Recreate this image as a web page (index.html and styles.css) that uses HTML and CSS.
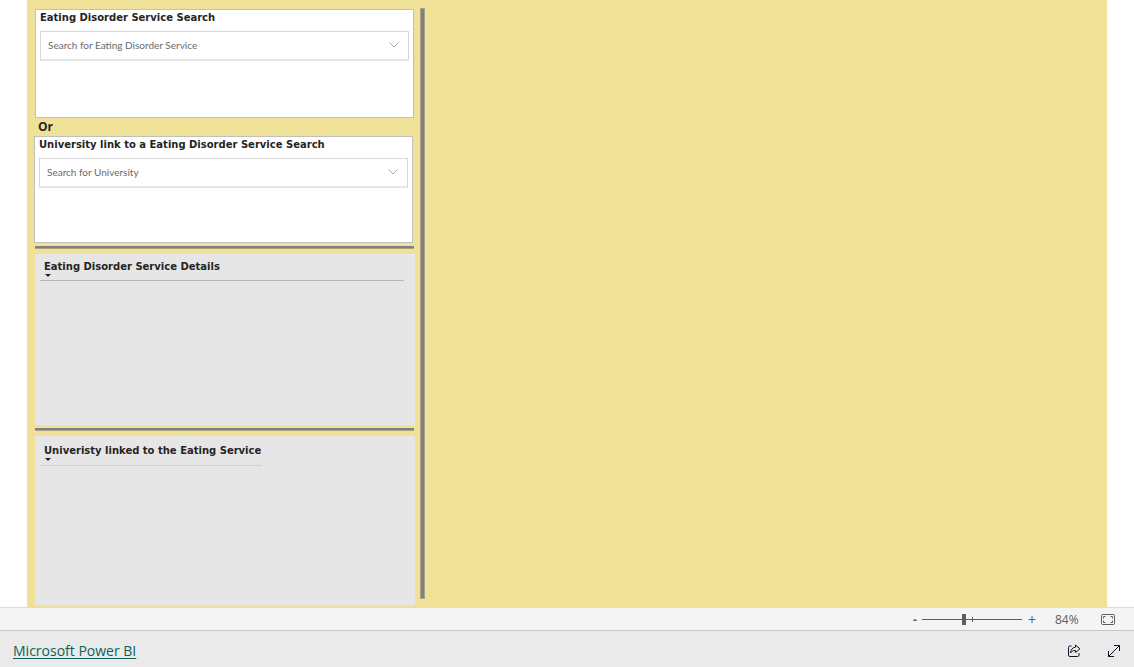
FILE: index.html
```html
<!DOCTYPE html>
<html lang="en">
<head>
<meta charset="utf-8">
<title>Eating Disorder Service Search</title>
<link rel="stylesheet" href="styles.css">
</head>
<body>
<main class="report">
  <div class="filters">
    <section class="card">
      <label class="heading" for="service">Eating Disorder Service Search</label>
      <div class="picker">
        <select id="service"><option>Search for Eating Disorder Service</option></select>
        <svg class="chevron" viewBox="0 0 10 6" aria-hidden="true"><path d="M.5.5 5 5 9.500.5"/></svg>
      </div>
    </section>
    <p class="or">Or</p>
    <section class="card card-university">
      <label class="heading" for="university">University link to a Eating Disorder Service Search</label>
      <div class="picker">
        <select id="university"><option>Search for University</option></select>
        <svg class="chevron" viewBox="0 0 10 6" aria-hidden="true"><path d="M.5.5 5 5 9.500.5"/></svg>
      </div>
    </section>
    <hr class="rule">
    <section class="panel panel-details">
      <table class="table">
        <thead><tr><th scope="col"><button class="sort" type="button">Eating Disorder Service Details<svg viewBox="0 0 6 3" aria-hidden="true"><path d="M0 0h6L3 3z"/></svg></button></th></tr></thead>
      </table>
    </section>
    <hr class="rule">
    <section class="panel panel-linked">
      <table class="table">
        <thead><tr><th scope="col"><button class="sort" type="button">Univeristy linked to the Eating Service<svg viewBox="0 0 6 3" aria-hidden="true"><path d="M0 0h6L3 3z"/></svg></button></th></tr></thead>
      </table>
    </section>
  </div>
  <div class="divider"></div>
</main>
<div class="zoombar">
  <button class="step" type="button" aria-label="Zoom out">-</button>
  <div class="slider">
    <input type="range" min="0" max="100" value="42" aria-label="Zoom">
    <span class="tick"></span>
  </div>
  <button class="step plus" type="button" aria-label="Zoom in">+</button>
  <span class="percent">84%</span>
  <button class="icon fit" type="button" aria-label="Fit to page">
    <svg width="14" height="11" viewBox="0 0 14 11" aria-hidden="true"><rect x=".5" y=".5" width="13" height="10" rx="1"/><path d="M2.500 4.500v-2h2M9.500 2.500h2v2M11.500 6.500v2h-2M4.500 8.500h-2v-2"/></svg>
  </button>
</div>
<footer class="footer">
  <a href="#">Microsoft Power BI</a>
  <div class="actions">
    <button class="icon" type="button" aria-label="Share">
      <svg width="14" height="14" viewBox="0 0 14 14" aria-hidden="true"><path d="M4.500 2H3a1.500 1.500 0 0 0-1.500 1.500v7.500a1.500 1.500 0 0 0 1.500 1.500h7.500a1.500 1.500 0 0 0 1.500-1.500V9M8.500 1 13 4.800 8.500 8.500v-2C6 6.500 4.800 7.200 3.500 9 3.800 5.500 5.500 3.500 8.500 3.200z"/></svg>
    </button>
    <button class="icon" type="button" aria-label="Full screen">
      <svg width="14" height="14" viewBox="0 0 14 14" aria-hidden="true"><path d="M1.500 12.500 12.500 1.500M7 1.500h5.500V7M1.500 7v5.500H7"/></svg>
    </button>
  </div>
</footer>
</body>
</html>
```
FILE: styles.css
```css
* { box-sizing: border-box; }
body {
  margin: 0;
  min-height: 100vh;
  display: flex;
  flex-direction: column;
  background: #fff;
  color: #252423;
  font-family: "Open Sans", "Noto Sans", sans-serif;
}
button {
  margin: 0;
  padding: 0;
  border: 0;
  background: none;
  color: inherit;
  font: inherit;
}
svg { display: block; }
.report {
  flex: 1;
  display: flex;
  gap: 5px;
  margin: 0 27px;
  padding: 8px 8px 2px;
  background: #f0e199;
}
.filters {
  width: 380px;
  display: flex;
  flex-direction: column;
  padding-top: 1px;
}
.divider {
  width: 5px;
  margin-bottom: 6px;
  background: #808080;
  border: 1px solid #a8a183;
}
.card {
  height: 109px;
  margin-right: 1px;
  padding: 0 4px;
  background: #fff;
  border: 1px solid #c0c0c0;
}
.card-university {
  height: 107px;
  margin: 0 2px 0 -1px;
}
.heading {
  display: block;
  height: 21px;
  font: 700 10px/15px "DejaVu Sans", sans-serif;
}
.picker {
  display: grid;
  align-items: center;
}
.picker > * { grid-area: 1 / 1; }
.picker select {
  width: 100%;
  height: 30px;
  padding: 0 7px 2px;
  appearance: none;
  background: #fff;
  border: 1px solid #d8d8d8;
  border-bottom: 2px solid #e6e6e6;
  border-radius: 0;
  color: #6a6a6a;
  font: 10px Lato, "Open Sans", sans-serif;
}
.chevron {
  width: 10px;
  height: 6px;
  justify-self: end;
  margin: 0 10px 2px 0;
  pointer-events: none;
  fill: none;
  stroke: #a6a6a6;
}
.or {
  margin: 0 3px;
  font-size: 12px;
  font-weight: 700;
  line-height: 18px;
}
.rule {
  width: 379px;
  height: 3px;
  margin: 3px 0 5px;
  border: 0;
  border-bottom: 1px solid #a8a183;
  background: #808080;
}
.panel {
  padding: 5px;
  background: #e6e6e6;
}
.panel-details { height: 171px; }
.panel-linked { flex: 1; padding-top: 7px; }
.table {
  width: 364px;
  border-collapse: collapse;
}
.panel-linked .table { width: 222px; }
.table th {
  height: 21px;
  padding: 0 0 0 4px;
  border-bottom: 1px solid #b8b8b8;
  text-align: left;
  vertical-align: top;
}
.panel-linked .table th { height: 22px; border-color: #cfcfcf; }
.sort {
  display: block;
  text-align: left;
  white-space: nowrap;
  font: 700 10px/15px "DejaVu Sans", sans-serif;
}
.sort svg {
  width: 6px;
  height: 3px;
  margin-left: 1px;
  fill: #252423;
}
.zoombar {
  height: 24px;
  display: flex;
  align-items: center;
  justify-content: flex-end;
  padding-right: 19px;
  background: #f4f4f4;
  border-top: 1px solid #dcdcdc;
  border-bottom: 1px solid #c6c6c6;
  color: #605e5c;
  font-size: 12px;
}
.step { width: 14px; font-weight: 700; }
.plus { width: 20px; font-size: 14px; font-weight: 400; }
.slider {
  position: relative;
  width: 100px;
  display: flex;
}
.slider input {
  width: 100%;
  height: 12px;
  margin: 0;
  appearance: none;
  background: linear-gradient(#605e5c, #605e5c) center / 100% 1px no-repeat;
}
.slider input::-webkit-slider-thumb {
  appearance: none;
  width: 4px;
  height: 11px;
  background: #605e5c;
}
.tick {
  position: absolute;
  left: 50px;
  top: 4px;
  width: 1px;
  height: 5px;
  background: #605e5c;
}
.percent { width: 52px; padding-left: 13px; }
.icon svg { fill: none; stroke: #1b1028; }
.fit { margin-left: 7px; }
.icon.fit svg { stroke: #605e5c; }
.footer {
  height: 36px;
  display: flex;
  align-items: center;
  justify-content: space-between;
  padding: 3px 13px 0;
  background: #eaeaea;
  font-size: 14px;
}
.footer a {
  color: #0b625b;
  text-underline-offset: 2px;
}
.actions { display: flex; gap: 26px; }
```
